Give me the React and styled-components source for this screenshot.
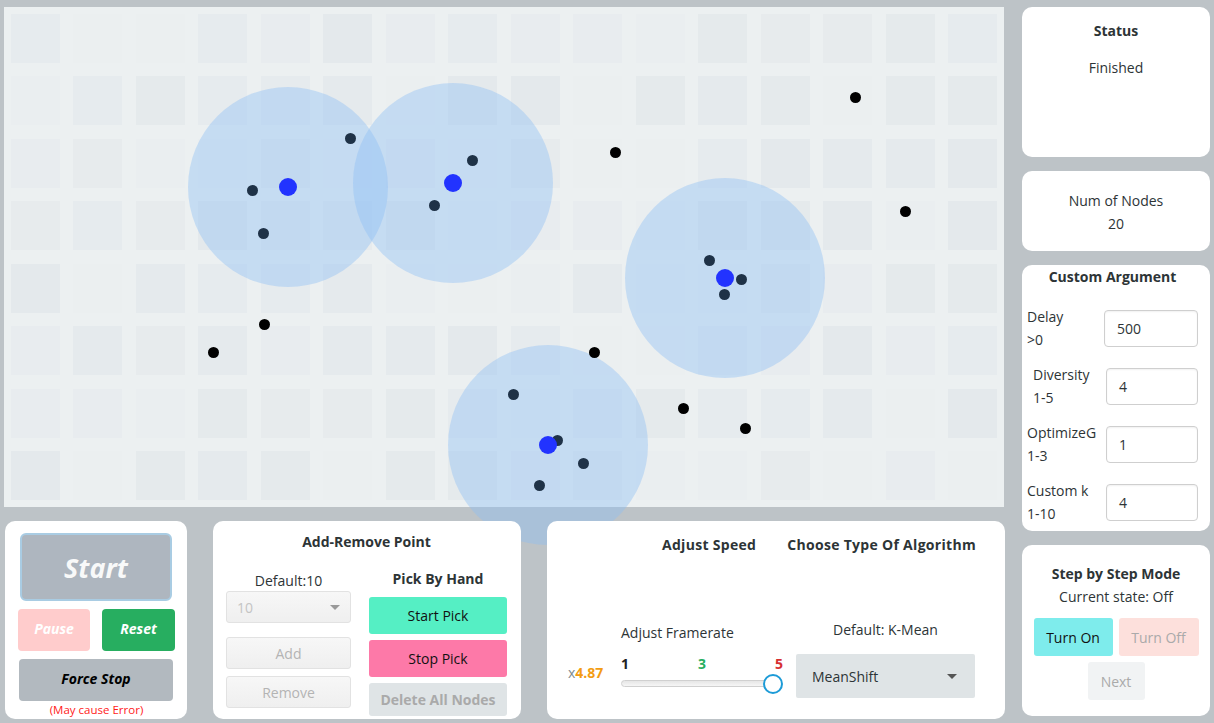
import React from "react";
import styled, { createGlobalStyle } from "styled-components";

const Global = createGlobalStyle`
  html, body { margin: 0; padding: 0; background: #bdc3c7; }
  body { font-family: "Open Sans", "Noto Sans", sans-serif; color: #2d3436; }
  * { box-sizing: border-box; }
`;

const Page = styled.div`
  display: flex;
  gap: 18px;
  padding: 7px 4px 0 4px;
  width: 1214px;
  height: 723px;
  overflow: hidden;
`;

const MainColumn = styled.div`
  width: 1000px;
  display: flex;
  flex-direction: column;
  gap: 14px;
`;

const Canvas = styled.div`
  position: relative;
  width: 1000px;
  height: 500px;
  background: #ecf0f1;
`;

const SquareGrid = styled.div`
  display: grid;
  grid-template-columns: repeat(16, 49px);
  grid-template-rows: repeat(8, 49px);
  gap: 13.5px;
  padding: 6.75px;
`;

const Square = styled.div`
  background: ${(p) => p.$tone};
`;

const Halo = styled.div`
  position: absolute;
  width: 200px;
  height: 200px;
  margin: -100px 0 0 -100px;
  border-radius: 50%;
  background: rgba(140, 191, 244, 0.4);
  z-index: 1;
`;

const Dot = styled.div`
  position: absolute;
  width: ${(p) => p.$size}px;
  height: ${(p) => p.$size}px;
  margin: ${(p) => -p.$size / 2}px 0 0 ${(p) => -p.$size / 2}px;
  border-radius: 50%;
  background: ${(p) => p.$color};
  z-index: 2;
`;

const BottomRow = styled.div`
  position: relative;
  z-index: 3;
  display: flex;
  gap: 26px;
  padding-left: 1px;
`;

const Panel = styled.div`
  flex: none;
  background: #fff;
  border-radius: 10px;
  height: 198px;
  width: ${(p) => p.$w}px;
`;

const ControlPanel = styled(Panel)`
  padding: 12px 12px 0 13px;
  display: flex;
  flex-direction: column;
  align-items: stretch;
`;

const StartButton = styled.button`
  height: 68px;
  margin: 0 3px 0 2px;
  background: #aeb6bf;
  border: 2px solid #a9cce3;
  border-radius: 6px;
  color: #f8f9f9;
  font-family: inherit;
  font-style: italic;
  font-weight: 700;
  font-size: 27px;
`;

const ButtonPair = styled.div`
  display: grid;
  grid-template-columns: 72px 73px;
  justify-content: space-between;
  margin-top: 8px;
`;

const ActionButton = styled.button`
  height: 42px;
  padding-bottom: 4px;
  border: none;
  border-radius: 4px;
  background: ${(p) => p.$bg};
  color: ${(p) => p.$fg};
  font-family: inherit;
  font-style: italic;
  font-weight: 700;
  font-size: 14px;
`;

const ForceButton = styled(ActionButton)`
  margin: 8px 2px 0 1px;
`;

const Warning = styled.div`
  text-align: center;
  color: #ff1a1a;
  font-size: 11.5px;
  margin-top: 1px;
`;

const PanelTitle = styled.div`
  font-weight: 700;
  font-size: 14px;
  text-align: center;
  white-space: nowrap;
`;

const PointPanel = styled(Panel)`
  padding: 11px 14px 0 13px;
`;

const PointColumns = styled.div`
  display: grid;
  grid-template-columns: 125px 138px;
  column-gap: 18px;
  margin-top: 18px;
`;

const Column = styled.div`
  display: flex;
  flex-direction: column;
  padding-top: ${(p) => p.$pt || 0}px;
`;

const SmallLabel = styled.div`
  font-size: 14px;
  text-align: ${(p) => p.$align || "center"};
  white-space: nowrap;
  margin-bottom: ${(p) => p.$mb || 0}px;
`;

const FakeSelect = styled.div`
  height: 32px;
  border: 1px solid #e2e2e2;
  border-radius: 3px;
  background: linear-gradient(#f7f7f7, #efefef);
  display: flex;
  align-items: center;
  justify-content: space-between;
  padding: 0 10px;
  color: #c4c4c4;
  font-size: 14px;
`;

const Caret = styled.span`
  width: 0;
  height: 0;
  border-left: 5px solid transparent;
  border-right: 5px solid transparent;
  border-top: 5px solid ${(p) => p.$color};
`;

const GhostButton = styled.button`
  height: 32px;
  margin-top: ${(p) => p.$mt}px;
  border: 1px solid #e2e2e2;
  border-radius: 3px;
  background: linear-gradient(#f7f7f7, #efefef);
  color: #b4b4b4;
  font-family: inherit;
  font-size: 14px;
`;

const PickButton = styled.button`
  height: ${(p) => p.$h}px;
  margin-top: ${(p) => p.$mt}px;
  border: none;
  border-radius: 3px;
  background: ${(p) => p.$bg};
  color: ${(p) => p.$fg};
  font-family: inherit;
  font-weight: ${(p) => (p.$bold ? 700 : 400)};
  font-size: 14px;
  white-space: nowrap;
`;

const SpeedPanel = styled(Panel)`
  padding: 14px 30px 21px 16px;
  display: flex;
  flex-direction: column;
  justify-content: space-between;
`;

const SpeedHeader = styled.div`
  display: flex;
  gap: 31px;
  padding-left: 99px;
  & > div { letter-spacing: 0.3px; }
`;

const SpeedBottom = styled.div`
  display: grid;
  grid-template-columns: 58px 175px 179px;
  row-gap: 12px;
  align-items: end;
`;

const Spacer = styled.div``;

const Multiplier = styled.div`
  align-self: center;
  font-size: 14px;
  color: #7f8c8d;
  padding-left: 5px;
  padding-bottom: 8px;
  & b { color: #f39c12; }
`;

const SliderBox = styled.div`
  width: 160px;
  display: flex;
  flex-direction: column;
  align-self: start;
`;

const TickRow = styled.div`
  display: flex;
  justify-content: space-between;
  font-weight: 700;
  font-size: 14px;
  line-height: 19px;
  margin-right: -2px;
`;

const Tick = styled.span`
  color: ${(p) => p.$color};
`;

const Track = styled.div`
  position: relative;
  height: 7px;
  margin-top: 7px;
  border: 1px solid #d0d0d0;
  border-radius: 4px;
  background: linear-gradient(#e6e6e6, #f6f6f6);
`;

const Thumb = styled.div`
  position: absolute;
  top: 50%;
  width: 20px;
  height: 20px;
  margin: -10px 0 0 -10px;
  border-radius: 50%;
  background: #fff;
  border: 2px solid #1d9bd7;
`;

const AlgoSelect = styled.div`
  height: 44px;
  background: #dfe4e6;
  border-radius: 2px;
  display: flex;
  align-items: center;
  justify-content: space-between;
  padding: 0 18px 0 16px;
  font-size: 14px;
  color: #2d3436;
`;

const SideColumn = styled.div`
  width: 188px;
  display: flex;
  flex-direction: column;
  gap: 14px;
`;

const Card = styled.div`
  background: #fff;
  border-radius: 10px;
  height: ${(p) => p.$h}px;
  padding: ${(p) => p.$pad};
  display: flex;
  flex-direction: column;
  align-items: center;
`;

const CardText = styled.div`
  font-size: 14px;
  font-weight: ${(p) => (p.$bold ? 700 : 400)};
  line-height: 23px;
  margin-top: ${(p) => p.$mt || 0}px;
  white-space: nowrap;
  text-align: center;
`;

const ArgList = styled.div`
  align-self: stretch;
  display: flex;
  flex-direction: column;
  gap: 12px;
  margin-top: 17px;
`;

const ArgRow = styled.div`
  display: grid;
  grid-template-columns: 1fr 92px;
  align-items: center;
`;

const ArgLabel = styled.div`
  font-size: 14px;
  line-height: 23px;
  padding-left: ${(p) => p.$indent || 0}px;
  white-space: nowrap;
`;

const ArgInput = styled.div`
  height: 37px;
  margin-left: ${(p) => p.$shift || 0}px;
  border: 1px solid #cfcfcf;
  border-radius: 4px;
  box-shadow: inset 0 1px 2px rgba(0,0,0,0.06);
  display: flex;
  align-items: center;
  padding-left: 12px;
  font-size: 14px;
`;

const ToggleRow = styled.div`
  display: grid;
  grid-template-columns: 79px 80px;
  gap: 6px;
  margin-top: 10px;
`;

const ToggleButton = styled.button`
  height: 38px;
  border: none;
  border-radius: 3px;
  background: ${(p) => p.$bg};
  color: ${(p) => p.$fg};
  font-family: inherit;
  font-size: 14px;
  white-space: nowrap;
`;

const NextButton = styled(ToggleButton)`
  width: 57px;
  margin-top: 6px;
`;

const tones = ["#e6ebee", "#e8ecef", "#e5eaed", "#eaeef0", "#e4e9ec", "#e7ebed", "#ebeff0", "#e5eaec"];
const squares = Array.from({ length: 128 }, (_, i) => tones[(i * 37 + ((i * i) % 11)) % tones.length]);

const OX = 4;
const OY = 7;
const centroids = [[288, 187], [453, 183], [725, 278], [548, 445]];
const members = [
  [350, 138], [252, 190], [263, 233], [472, 160], [434, 205], [709, 260],
  [741, 279], [724, 294], [513, 394], [557, 440], [583, 463], [539, 485],
];
const loners = [[855, 97], [615, 152], [905, 211], [264, 324], [213, 352], [594, 352], [683, 408], [745, 428]];

const at = ([x, y]) => ({ left: x - OX, top: y - OY });

export default function App() {
  return (
    <>
      <Global />
      <Page>
        <MainColumn>
          <Canvas>
            <SquareGrid>
              {squares.map((t, i) => (
                <Square key={i} $tone={t} />
              ))}
            </SquareGrid>
            {centroids.map((c, i) => (
              <Halo key={"h" + i} style={at(c)} />
            ))}
            {members.map((c, i) => (
              <Dot key={"m" + i} $size={11} $color="#1f3247" style={at(c)} />
            ))}
            {loners.map((c, i) => (
              <Dot key={"l" + i} $size={11} $color="#000" style={at(c)} />
            ))}
            {centroids.map((c, i) => (
              <Dot key={"c" + i} $size={18} $color="#2233ff" style={at(c)} />
            ))}
          </Canvas>

          <BottomRow>
            <ControlPanel $w={182}>
              <StartButton>Start</StartButton>
              <ButtonPair>
                <ActionButton $bg="#ffcccc" $fg="#fff">Pause</ActionButton>
                <ActionButton $bg="#27ae60" $fg="#fff">Reset</ActionButton>
              </ButtonPair>
              <ForceButton $bg="#b2b9bf" $fg="#000">Force Stop</ForceButton>
              <Warning>(May cause Error)</Warning>
            </ControlPanel>

            <PointPanel $w={308}>
              <PanelTitle>Add-Remove Point</PanelTitle>
              <PointColumns>
                <Column $pt={2}>
                  <SmallLabel $mb={1}>Default:10</SmallLabel>
                  <FakeSelect>
                    <span>10</span>
                    <Caret $color="#999" />
                  </FakeSelect>
                  <GhostButton $mt={14}>Add</GhostButton>
                  <GhostButton $mt={7}>Remove</GhostButton>
                </Column>
                <Column>
                  <PanelTitle>Pick By Hand</PanelTitle>
                  <PickButton $h={37} $mt={9} $bg="#55efc4" $fg="#111">Start Pick</PickButton>
                  <PickButton $h={37} $mt={6} $bg="#fd79a8" $fg="#111">Stop Pick</PickButton>
                  <PickButton $h={33} $mt={6} $bg="#dfe4e6" $fg="#aaa" $bold>Delete All Nodes</PickButton>
                </Column>
              </PointColumns>
            </PointPanel>

            <SpeedPanel $w={458}>
              <SpeedHeader>
                <PanelTitle>Adjust Speed</PanelTitle>
                <PanelTitle>Choose Type Of Algorithm</PanelTitle>
              </SpeedHeader>
              <SpeedBottom>
                <Spacer />
                <SmallLabel $align="left">Adjust Framerate</SmallLabel>
                <SmallLabel $mb={3}>Default: K-Mean</SmallLabel>
                <Multiplier>
                  x<b>4.87</b>
                </Multiplier>
                <SliderBox>
                  <TickRow>
                    <Tick $color="#222">1</Tick>
                    <Tick $color="#27ae60">3</Tick>
                    <Tick $color="#d63031">5</Tick>
                  </TickRow>
                  <Track>
                    <Thumb style={{ left: "95.5%" }} />
                  </Track>
                </SliderBox>
                <AlgoSelect>
                  <span>MeanShift</span>
                  <Caret $color="#555" />
                </AlgoSelect>
              </SpeedBottom>
            </SpeedPanel>
          </BottomRow>
        </MainColumn>

        <SideColumn>
          <Card $h={150} $pad="12px 0 0 0">
            <CardText $bold>Status</CardText>
            <CardText $mt={14}>Finished</CardText>
          </Card>
          <Card $h={80} $pad="18px 0 0 0">
            <CardText>Num of Nodes</CardText>
            <CardText>20</CardText>
          </Card>
          <Card $h={266} $pad="0 12px 0 5px">
            <CardText $bold>Custom Argument</CardText>
            <ArgList>
              <ArgRow>
                <ArgLabel>Delay<br />&gt;0</ArgLabel>
                <ArgInput $shift={-2}>500</ArgInput>
              </ArgRow>
              <ArgRow>
                <ArgLabel $indent={6}>Diversity<br />1-5</ArgLabel>
                <ArgInput>4</ArgInput>
              </ArgRow>
              <ArgRow>
                <ArgLabel>OptimizeG<br />1-3</ArgLabel>
                <ArgInput>1</ArgInput>
              </ArgRow>
              <ArgRow>
                <ArgLabel>Custom k<br />1-10</ArgLabel>
                <ArgInput>4</ArgInput>
              </ArgRow>
            </ArgList>
          </Card>
          <Card $h={171} $pad="17px 0 0 0">
            <CardText $bold>Step by Step Mode</CardText>
            <CardText>Current state: Off</CardText>
            <ToggleRow>
              <ToggleButton $bg="#7eecec" $fg="#111">Turn On</ToggleButton>
              <ToggleButton $bg="#fde0dc" $fg="#aaa">Turn Off</ToggleButton>
            </ToggleRow>
            <NextButton $bg="#f1f3f4" $fg="#aaa">Next</NextButton>
          </Card>
        </SideColumn>
      </Page>
    </>
  );
}
